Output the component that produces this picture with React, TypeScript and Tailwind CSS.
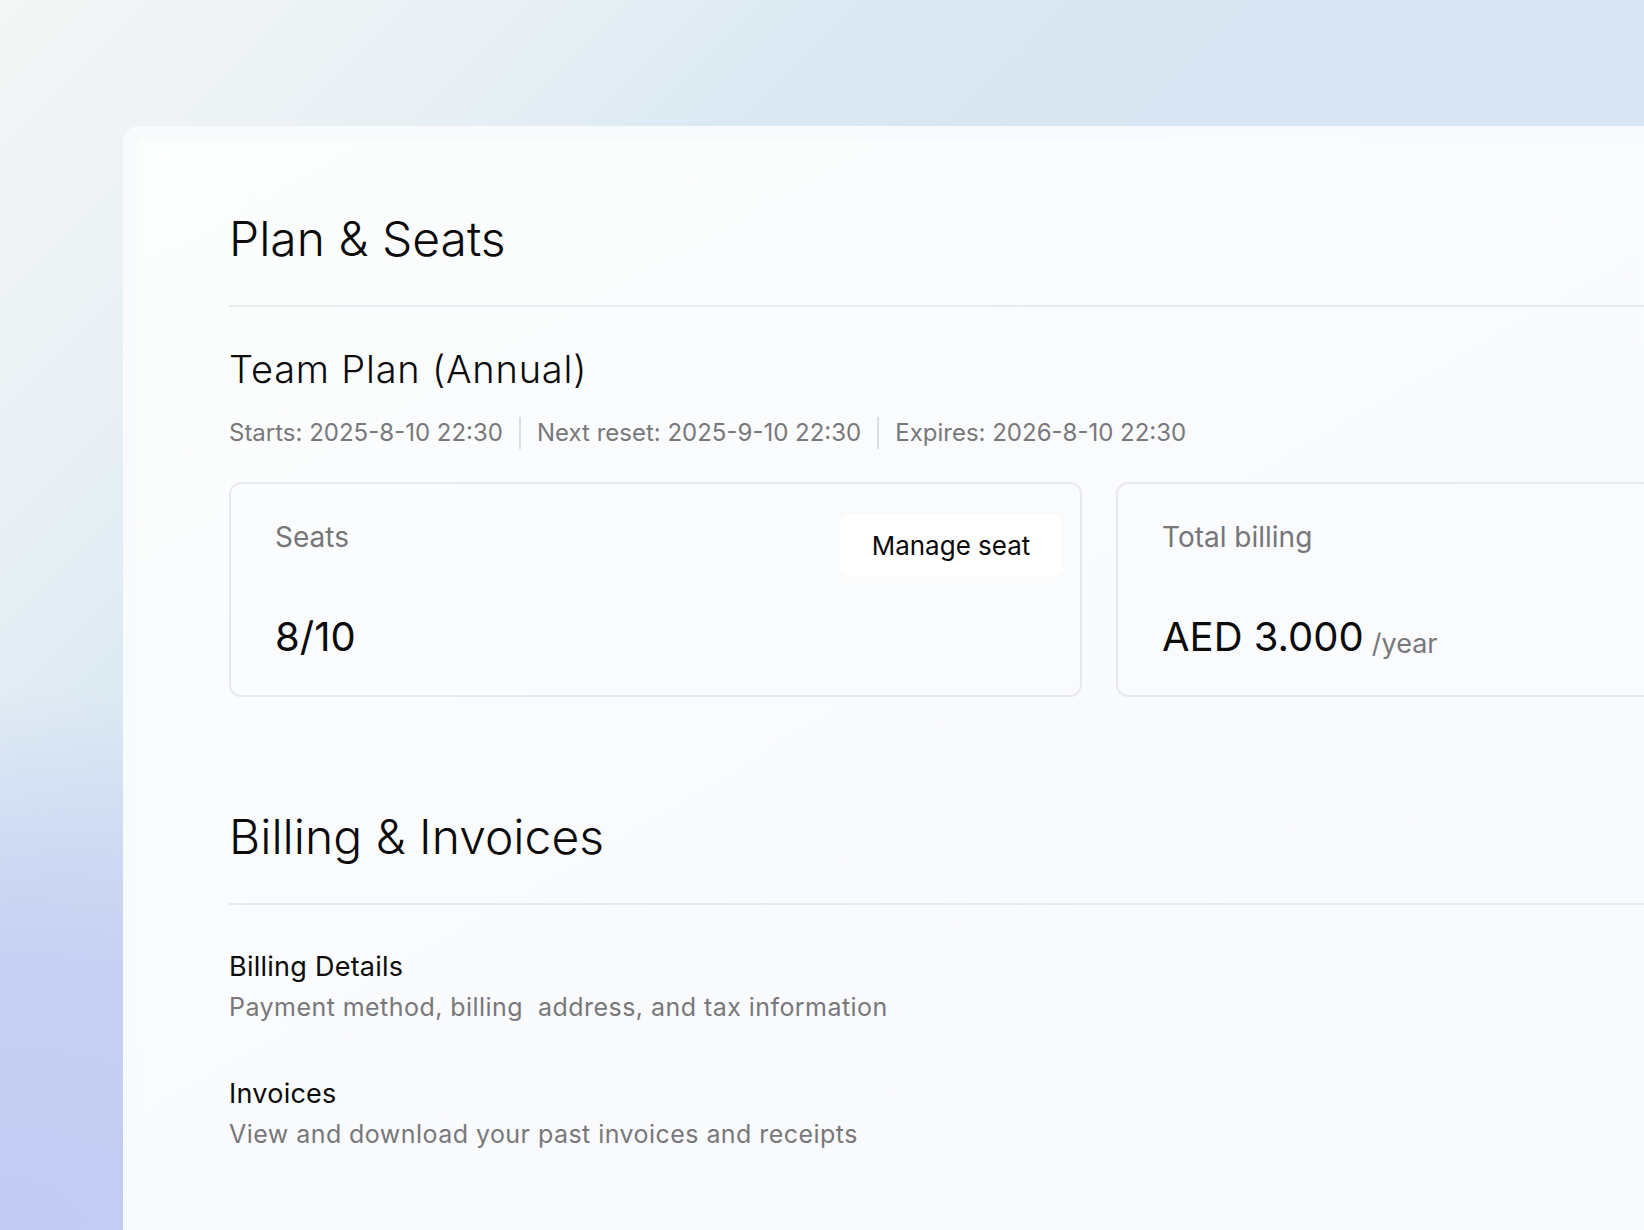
const META = [
  "Starts: 2025-8-10 22:30",
  "Next reset: 2025-9-10 22:30",
  "Expires: 2026-8-10 22:30",
];

const BILLING_LINKS = [
  { title: "Billing Details", detail: "Payment method, billing\u00a0 address, and tax information" },
  { title: "Invoices", detail: "View and download your past invoices and receipts" },
];

function SectionTitle({ children }: { children: React.ReactNode }) {
  return (
    <div>
      <h2 className="text-[48px] leading-[58px] font-light text-[#0b0b0c]">{children}</h2>
      <div className="mt-[37px] h-[2px] w-full bg-[#e9eaed]" />
    </div>
  );
}

function StatCard({ label, children, action }: { label: string; children: React.ReactNode; action?: React.ReactNode }) {
  return (
    <div className="flex h-[215px] rounded-[12px] border-2 border-[#e8e9ec] bg-[#fafbfd]/50">
      <div className="flex flex-1 flex-col pl-[44px] pt-[35px]">
        <p className="text-[28px] leading-[36px] text-[#767679]">{label}</p>
        <div className="mt-[58px] flex items-baseline">{children}</div>
      </div>
      {action && <div className="pr-[18px] pt-[30px]">{action}</div>}
    </div>
  );
}

export default function App() {
  return (
    <div
      className="flex h-[1230px] w-full overflow-hidden bg-[radial-gradient(ellipse_65%_55%_at_0%_100%,#c2cbf3_0%,#c6d0f3_40%,rgba(205,218,243,0)_80%),linear-gradient(135deg,#f5f6f6_0%,#e8f0f4_18%,#d9e8f3_32%,#d8e5f4_55%,#dae3f5_100%)] pl-[123px] pt-[126px]"
      style={{ fontFamily: "Inter, 'Noto Sans', sans-serif" }}
    >
      <div className="flex-1 rounded-tl-[16px] bg-[#f9fafb] pl-[14px] pt-[13px]">
        <div className="h-full rounded-tl-[8px] bg-[linear-gradient(150deg,#fcfdfd_0%,#fafbfd_40%,#f8f9fd_100%)] pl-[92px] pt-[71px]">
          <div className="w-[1740px]">
            <SectionTitle>Plan &amp; Seats</SectionTitle>

            <h3 className="mt-[39px] text-[38px] leading-[46px] font-light tracking-[0.8px] text-[#0b0b0c]">Team Plan (Annual)</h3>
            <div className="mt-[25px] flex items-stretch text-[24px] leading-[32px] text-[#78787b]">
              {META.map((m, i) => (
                <div key={m} className="flex">
                  {i > 0 && <span className="mx-4 w-[2px] bg-[#dcdde0]" />}
                  <span>{m}</span>
                </div>
              ))}
            </div>

            <div className="mt-[33px] grid grid-cols-2 gap-[34px]">
              <StatCard
                label="Seats"
                action={
                  <button className="h-[63px] w-[222px] rounded-[10px] bg-white text-[26px] text-[#0b0b0c] shadow-[0_0_2px_rgba(0,0,0,0.02)]">
                    Manage seat
                  </button>
                }
              >
                <span className="text-[40px] leading-[48px] text-[#0b0b0c]">8/10</span>
              </StatCard>
              <StatCard label="Total billing">
                <span className="text-[40px] leading-[48px] text-[#0b0b0c]">AED 3.000</span>
                <span className="ml-2 translate-y-[2px] text-[27px] text-[#78787b]">/year</span>
              </StatCard>
            </div>

            <div className="mt-[111px]">
              <SectionTitle>Billing &amp; Invoices</SectionTitle>
            </div>

            <div className="mt-[42px] flex flex-col gap-[51px]">
              {BILLING_LINKS.map((item) => (
                <div key={item.title}>
                  <p className="text-[27px] leading-[40px] tracking-[0.25px] text-[#0b0b0c]">{item.title}</p>
                  <p className="mt-1 text-[25px] leading-[32px] tracking-[0.45px] text-[#78787b]">{item.detail}</p>
                </div>
              ))}
            </div>
          </div>
        </div>
      </div>
    </div>
  );
}
